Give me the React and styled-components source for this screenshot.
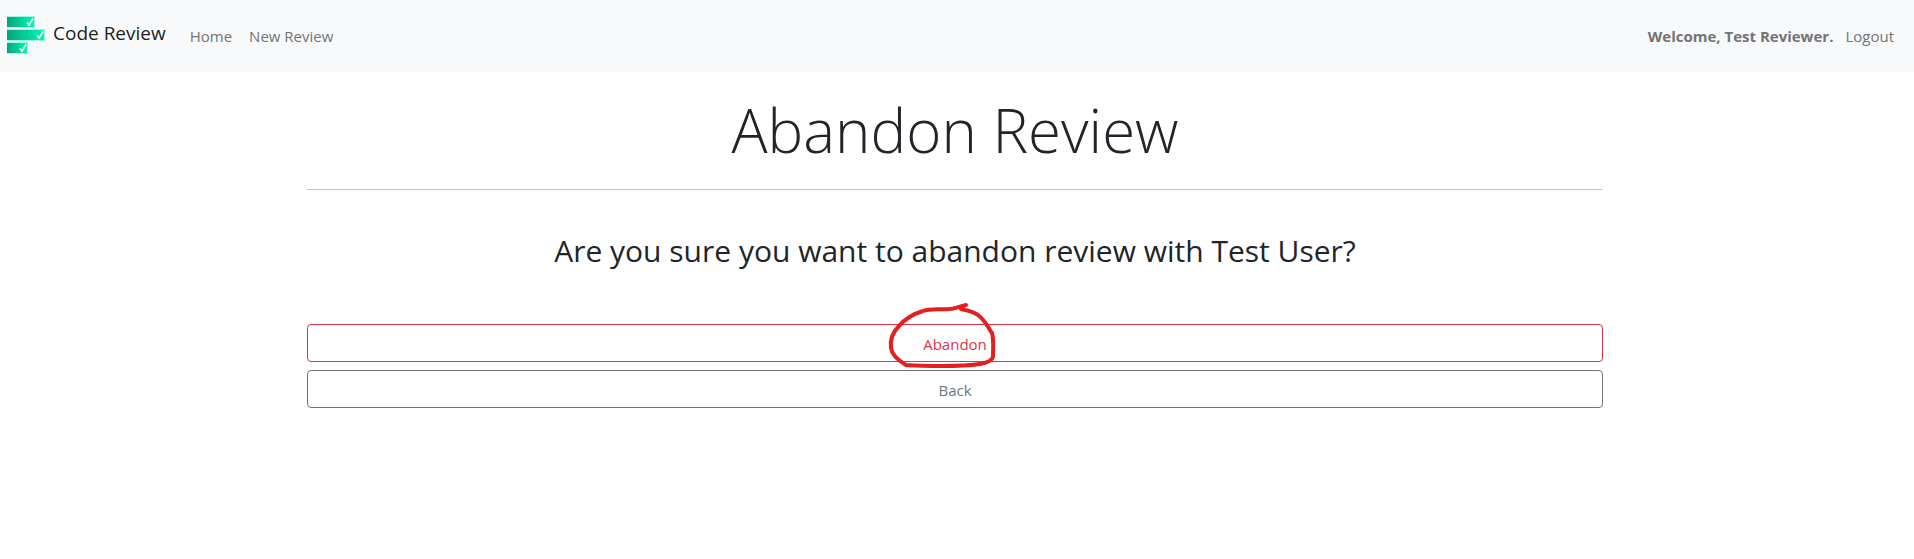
import React from 'react';
import styled, { createGlobalStyle } from 'styled-components';

const GlobalStyle = createGlobalStyle`
  *, *::before, *::after { box-sizing: border-box; }
  body {
    margin: 0;
    background: #fff;
    color: #212529;
    font-family: 'Open Sans', 'Noto Sans', sans-serif;
    font-size: 15px;
    line-height: 24px;
  }
`;

const Navbar = styled.nav`
  display: flex;
  align-items: center;
  height: 72px;
  padding: 0 20px 0 7px;
  background: #f8f9fa;
`;

const Brand = styled.a`
  display: flex;
  align-items: flex-start;
  gap: 8px;
  height: 40px;
  margin-right: 24px;
  color: rgba(0, 0, 0, 0.9);
  font-size: 19px;
  line-height: 34px;
  text-decoration: none;
`;

const Links = styled.div`
  display: flex;
  flex: 1;
  gap: 17px;
`;

const NavLink = styled.a`
  color: #737475;
  text-decoration: none;
`;

const Account = styled.div`
  display: flex;
  gap: 12px;
`;

const Welcome = styled.strong`
  color: #737475;
  font-weight: 700;
`;

const Main = styled.main`
  max-width: 1320px;
  margin: 0 auto;
  padding: 20px 14px 0 10px;
  text-align: center;
`;

const Title = styled.h1`
  margin: 0;
  font-size: 60px;
  font-weight: 300;
  line-height: 77px;
`;

const Rule = styled.hr`
  height: 1px;
  margin: 20px 0 42px;
  border: 0;
  background: #c8c9ca;
`;

const Question = styled.h2`
  margin: 0 0 54px;
  font-size: 30px;
  font-weight: 400;
  line-height: 38px;
`;

const Actions = styled.div`
  display: grid;
  gap: 8px;
`;

const ActionButton = styled.button`
  height: 38px;
  padding: 2px 12px 0;
  border: 1px solid ${(p) => p.$color};
  border-radius: 4px;
  background: transparent;
  color: ${(p) => p.$color};
  font: inherit;
  cursor: pointer;
`;

const Marked = styled.span`
  position: relative;
`;

const InkCircle = styled.svg`
  position: absolute;
  left: 50%;
  top: 50%;
  width: 110px;
  height: 66px;
  margin: -42px 0 0 -67px;
  overflow: visible;
  pointer-events: none;
`;

const bars = [
  { y: 0, width: 28, check: 19 },
  { y: 13, width: 38, check: 29 },
  { y: 26, width: 21, check: 12 },
];

function Logo() {
  return (
    <svg width="38" height="38" viewBox="0 0 38 38" aria-hidden="true">
      <defs>
        <linearGradient id="bar">
          <stop offset="0" stopColor="#05a37b" />
          <stop offset="1" stopColor="#00f8b7" />
        </linearGradient>
      </defs>
      {bars.map(({ y, width, check }) => (
        <g key={y}>
          <rect y={y} width={width} height="12" fill="#9cf5dc" />
          <rect y={y + 1} width={width - 1} height="10" fill="url(#bar)" />
          <path d={`M${check + 1} ${y + 6.5}l2 2.7 4-6.7`} fill="none" stroke="#fff" strokeWidth="1.5" />
        </g>
      ))}
    </svg>
  );
}

export default function App() {
  return (
    <>
      <GlobalStyle />
      <Navbar>
        <Brand href="#">
          <Logo />
          Code Review
        </Brand>
        <Links>
          <NavLink href="#">Home</NavLink>
          <NavLink href="#">New Review</NavLink>
        </Links>
        <Account>
          <Welcome>Welcome, Test Reviewer.</Welcome>
          <NavLink href="#">Logout</NavLink>
        </Account>
      </Navbar>
      <Main>
        <Title>Abandon Review</Title>
        <Rule />
        <Question>Are you sure you want to abandon review with Test User?</Question>
        <Actions>
          <ActionButton type="button" $color="#dc3545">
            <Marked>
              Abandon
              <InkCircle viewBox="0 0 110 66" aria-hidden="true">
                <path
                  d="M78 3C70 5 66 7 62 7C52 8 43 6 35 9C25 12 17 17 11 24C5 30 2 38 3 46C4 54 13 60 18 63C34 64 72 65 92 62C99 61 105 58 105 54C105 46 106 38 104 31C100 26 98 19 90 13C84 9 78 8 73 7"
                  fill="none"
                  stroke="#e71d1f"
                  strokeWidth="4"
                  strokeLinecap="round"
                  strokeLinejoin="round"
                />
              </InkCircle>
            </Marked>
          </ActionButton>
          <ActionButton type="button" $color="#6c757d">Back</ActionButton>
        </Actions>
      </Main>
    </>
  );
}
